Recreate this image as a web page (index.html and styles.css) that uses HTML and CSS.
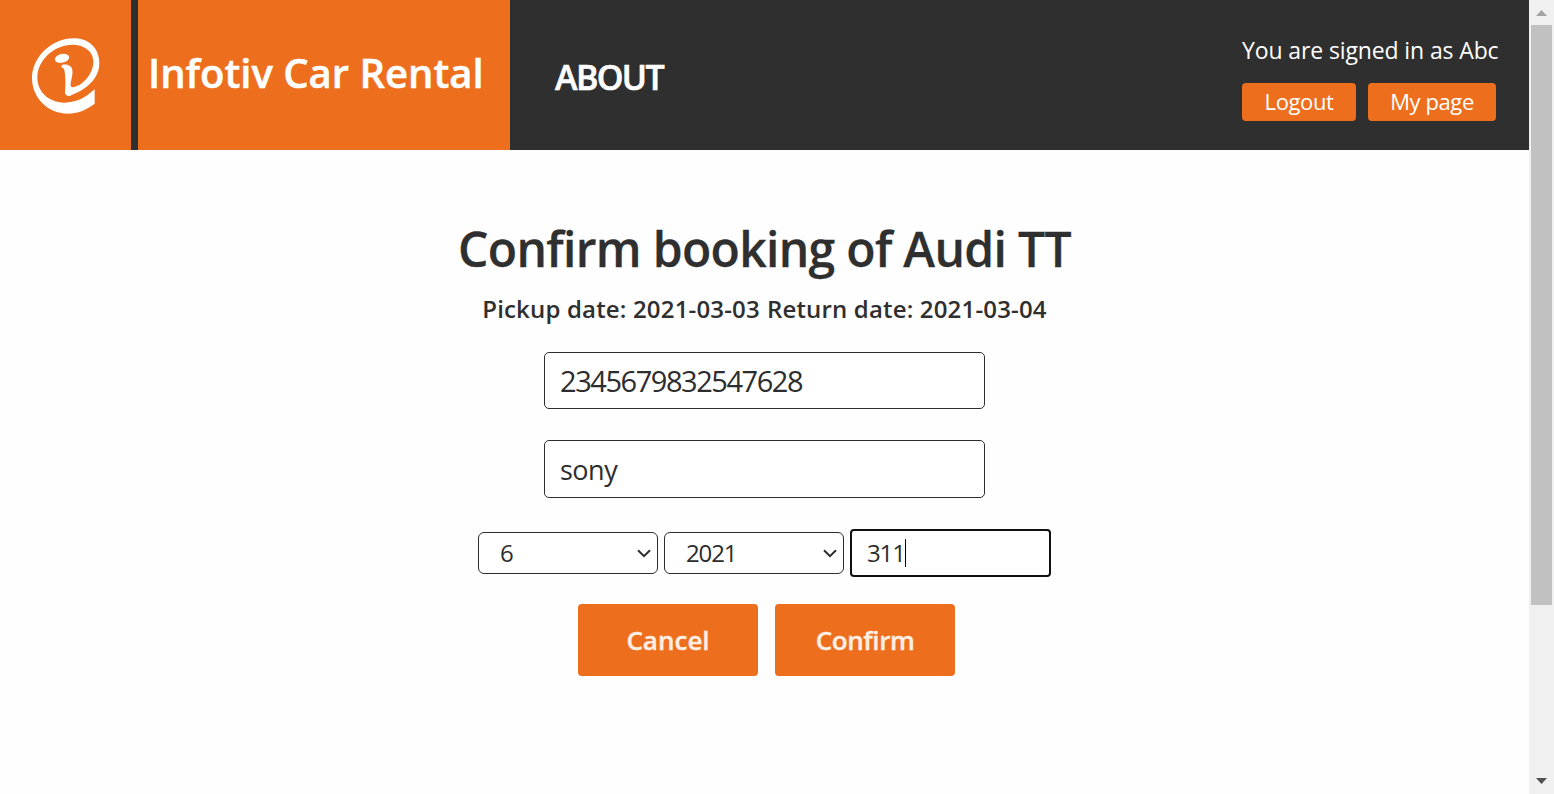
FILE: index.html
```html
<!DOCTYPE html>
<html lang="en">
<head>
<meta charset="utf-8">
<title>Infotiv Car Rental</title>
<link rel="stylesheet" href="styles.css">
</head>
<body>
<div class="window">
  <div class="page">
    <header class="header">
      <a class="logo">
        <svg width="130" height="150" viewBox="0 0 390 450">
          <path fill="#fff" fill-rule="evenodd" d="M284 268V311C258 330 233 341 203 341C142 341 96 292 96 235C96 171 155 115 222 115C267 115 298 145 298 190C298 234 262 268 211 287C202 290 194 284 195 275C198 251 196 225 193 210C191 202 183 204 184 198C186 192 202 193 209 197C217 202 219 212 217 224L212 250C211 258 213 262 218 262C248 257 280 222 280 185C280 154 253 134 218 134C163 134 112 180 112 232C112 276 145 307 193 308C231 308 257 292 284 268Z"/>
          <ellipse cx="186" cy="175" rx="22" ry="13" transform="rotate(-13 186 175)" fill="#fff"/>
        </svg>
      </a>
      <div class="brand"><span>Infotiv Car Rental</span></div>
      <nav class="nav"><span>ABOUT</span></nav>
      <div class="user">
        <div class="welcome"><span>You are signed in as Abc</span></div>
        <div class="user-actions">
          <button class="small-btn logout">Logout</button>
          <button class="small-btn mypage">My page</button>
        </div>
      </div>
    </header>
    <main class="main">
      <h1 class="title"><span>Confirm booking of Audi TT</span></h1>
      <p class="dates"><span>Pickup date: 2021-03-03</span><span>Return date: 2021-03-04</span></p>
      <input class="field number" value="2345679832547628">
      <input class="field holder" value="sony">
      <div class="card-row">
        <div class="select"><span>6</span><svg class="chevron" width="14" height="9" viewBox="0 0 14 9"><path d="M1 1.2L7 7.2L13 1.2" fill="none" stroke="#2d2d2d" stroke-width="2"/></svg></div>
        <div class="select"><span>2021</span><svg class="chevron" width="14" height="9" viewBox="0 0 14 9"><path d="M1 1.2L7 7.2L13 1.2" fill="none" stroke="#2d2d2d" stroke-width="2"/></svg></div>
        <div class="cvc"><span>311</span><i class="caret"></i></div>
      </div>
      <div class="actions">
        <button class="big-btn cancel">Cancel</button>
        <button class="big-btn confirm">Confirm</button>
      </div>
    </main>
  </div>
  <div class="scrollbar">
    <svg class="arrow up" width="11" height="6" viewBox="0 0 11 6"><path d="M0 6L5.5 0L11 6Z" fill="#a3a3a3"/></svg>
    <div class="thumb"></div>
    <svg class="arrow down" width="11" height="6" viewBox="0 0 11 6"><path d="M0 0H11L5.5 6Z" fill="#505050"/></svg>
  </div>
</div>
</body>
</html>
```

FILE: styles.css
```css
* { box-sizing: border-box; }
body { margin: 0; font-family: "Open Sans", "Noto Sans", sans-serif; color: #2f2f2f; background: #fff; overflow: hidden; }
.window { display: flex; height: 794px; }
.page { flex: 1; min-width: 0; background: #fefefe; }
.header { display: flex; height: 150px; background: #2f2f2f; color: #fff; }
.logo { display: block; width: 131px; background: #ed6f1d; }
.logo svg { display: block; }
.brand { width: 372px; margin-left: 7px; padding: 43px 0 0 10px; background: #ed6f1d; font-size: 40px; line-height: 60px; font-weight: 600; white-space: nowrap; -webkit-text-stroke: 0.5px #fff; }
.nav { padding: 52px 0 0 45px; font-size: 34px; line-height: 50px; font-weight: 600; flex: 1; letter-spacing: -1.6px; -webkit-text-stroke: 0.6px #fff; }
.user { width: 287px; padding-top: 36px; }
.welcome { height: 30px; line-height: 28px; font-size: 23px; letter-spacing: -0.12px; white-space: nowrap; }
.user-actions { display: flex; gap: 12px; margin-top: 17px; }
button { border: 0; font-family: inherit; background: #ed6f1d; color: #fff; border-radius: 4px; padding: 0; text-align: center; }
.small-btn { height: 38px; padding-bottom: 2px; font-size: 22px; letter-spacing: -0.4px; }
.logout { width: 114px; }
.mypage { width: 128px; }
.main { display: flex; flex-direction: column; align-items: center; padding-top: 68px; }
.title { margin: 0; font-size: 48px; line-height: 62px; font-weight: 600; letter-spacing: -0.67px; -webkit-text-stroke: 0.3px #2f2f2f; }
.dates { margin: 13px 0 0; display: flex; gap: 7px; font-size: 24px; line-height: 32px; font-weight: 600; letter-spacing: 0.17px; white-space: nowrap; }
.field { width: 441px; border: 1px solid #2d2d2d; border-radius: 5px; padding: 0 15px; font-family: inherit; font-size: 29px; color: #2d2d2d; background: #fff; }
.number { height: 57px; margin-top: 27px; letter-spacing: -1.45px; }
.holder { height: 58px; margin-top: 31px; font-size: 27px; letter-spacing: -0.5px; }
.card-row { display: flex; align-items: center; gap: 6px; margin-top: 31px; font-size: 24px; letter-spacing: -1.1px; color: #2d2d2d; }
.card-row span { padding-bottom: 1px; }
.select { display: flex; align-items: center; justify-content: space-between; width: 180px; height: 42px; border: 1px solid #2d2d2d; border-radius: 6px; padding: 0 6px 0 21px; background: #fff; }
.cvc { display: flex; align-items: center; width: 201px; height: 48px; border: 2px solid #101010; border-radius: 4px; padding-left: 15px; background: #fff; }
.caret { width: 1px; height: 28px; background: #000; }
.actions { display: flex; gap: 17px; margin: 27px 0 0 4px; }
.big-btn { width: 180px; height: 72px; font-size: 26px; font-weight: 600; color: #ffeee4; -webkit-text-stroke: 0.4px #ffeee4; }
.confirm { letter-spacing: -0.4px; }
.scrollbar { display: flex; flex-direction: column; align-items: center; width: 25px; background: #f0f0f0; }
.thumb { width: 21px; height: 580px; margin-top: 9px; background: #c1c1c1; }
.arrow.up { margin-top: 10px; }
.arrow.down { margin-top: auto; margin-bottom: 10px; }
```
